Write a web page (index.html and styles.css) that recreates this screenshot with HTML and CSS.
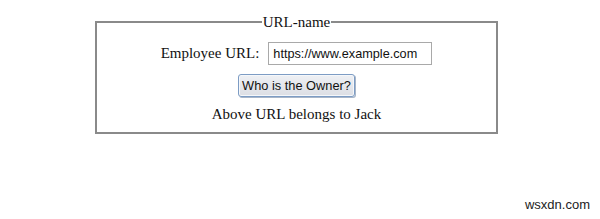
FILE: index.html
```html
<!DOCTYPE html>
<html lang="en">
  <head>
    <meta charset="UTF-8" />
    <meta name="viewport" content="width=device-width, initial-scale=1.0" />
    <link rel="stylesheet" href="styles.css">
    <title>URL Owner</title>
  </head>
  <body>
    <fieldset class="owner-box">
      <legend>URL-name</legend>
      <div class="row">
        <label for="url">Employee URL:</label>
        <input id="url" type="text" value="https://www.example.com" />
      </div>
      <div class="row">
        <button class="owner-btn">Who is the Owner?</button>
      </div>
      <div class="row result">Above URL belongs to Jack</div>
    </fieldset>
    <div class="mark">wsxdn.com</div>
  </body>
</html>
```

FILE: styles.css
```css
body {
  margin: 0;
  padding-top: 13px;
  font-family: "Liberation Serif", "Times New Roman", serif;
  font-size: 15px;
  color: #111;
  background: #fff;
  position: relative;
  height: 219px;
  box-sizing: border-box;
}

.owner-box {
  width: 403px;
  box-sizing: border-box;
  margin: 0 0 0 95px;
  padding: 0 0 9px 0;
  border: 2px solid #8a8a8a;
  text-align: center;
}

.owner-box legend {
  padding: 0 1px;
  line-height: 18px;
}

.row {
  display: flex;
  justify-content: center;
  align-items: center;
}

.row + .row {
  margin-top: 9px;
}

.row:first-of-type {
  margin-top: 11px;
}

.row label {
  margin-right: 9px;
}

.row input {
  width: 164px;
  height: 23px;
  box-sizing: border-box;
  border: 1px solid #a9a9a9;
  padding: 1px 4px;
  font-family: "Liberation Sans", Arial, sans-serif;
  font-size: 12.7px;
  color: #111;
}

.owner-btn {
  width: 117px;
  height: 23px;
  padding: 0;
  font-family: "Liberation Sans", Arial, sans-serif;
  font-size: 12.8px;
  color: #111;
  border: 1px solid #7d9cc4;
  border-radius: 3px;
  background: linear-gradient(#eef0f4, #dcdee4);
  box-shadow: inset 0 0 0 1px #f5f7fa, 1px 1px 0 #a9b6c8;
}

.result {
  margin-top: 10px;
  line-height: 17px;
}

.mark {
  position: absolute;
  right: 10px;
  bottom: 7px;
  font-family: "Liberation Sans", Arial, sans-serif;
  font-size: 13px;
  color: #222;
}
```
